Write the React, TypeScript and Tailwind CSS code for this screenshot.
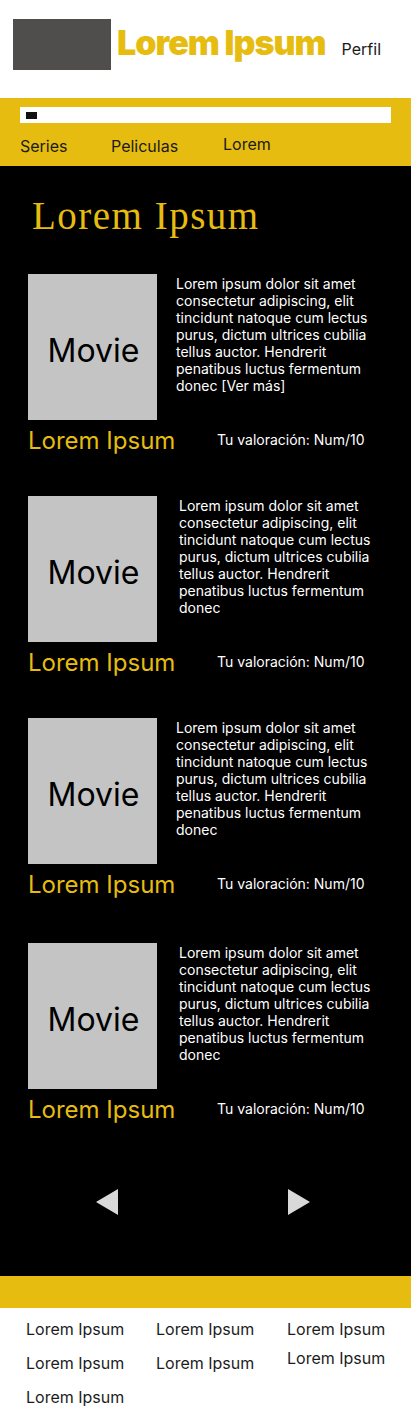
const font = { fontFamily: 'Inter, "Noto Sans", sans-serif' }

const blurb =
  'Lorem ipsum dolor sit amet consectetur adipiscing, elit tincidunt natoque cum lectus purus, dictum ultrices cubilia tellus auctor. Hendrerit penatibus luctus fermentum donec'

const movies = [
  { text: blurb + ' [Ver más]', textPad: 'ml-[19px]', top: '' },
  { text: blurb, textPad: 'ml-[22px]', top: '' },
  { text: blurb, textPad: 'ml-[19px]', top: '' },
  { text: blurb, textPad: 'ml-[22px]', top: 'mt-[3px]' },
]

function MovieCard({ text, textPad, top }: { text: string; textPad: string; top: string }) {
  return (
    <div className={`pl-[28px] ${top}`}>
      <div className="flex">
        <div className="w-[129px] h-[146px] shrink-0 bg-[#c4c4c4] flex items-center justify-center">
          <span className="text-[32px] text-black leading-none pl-[2px] pt-[8px]">Movie</span>
        </div>
        <p className={`${textPad} pt-[1px] text-[14px] leading-[17px] text-white w-[200px]`}>{text}</p>
      </div>
      <div className="flex items-center mt-[6px]">
        <span className="text-[24px] leading-[29px] text-[#e6bc10] w-[189px]">Lorem Ipsum</span>
        <span className="text-[14px] text-white leading-[17px] -mt-[2px]">Tu valoración: Num/10</span>
      </div>
    </div>
  )
}

export default function App() {
  return (
    <div className="w-[411px] bg-white" style={font}>
      <header className="h-[98px] flex items-start pt-[19px] pl-[13px]">
        <div className="w-[98px] h-[51px] bg-[#4f4e4c]" />
        <h1 className="ml-[6px] mt-[3px] text-[34px] leading-[42px] font-black text-[#e6bc10] tracking-[-1px]">
          Lorem Ipsum
        </h1>
        <span className="ml-[16px] mt-[20px] text-[16px] leading-[20px] text-[#1a1a1a]">Perfil</span>
      </header>

      <nav className="bg-[#e6bc10] h-[68px] pt-[9px]">
        <div className="mx-[20px] h-[16px] bg-white flex items-center pl-[6px]">
          <div className="w-[11px] h-[7px] bg-[#111]" />
        </div>
        <div className="flex mt-[13px] pl-[20px] text-[16px] leading-[20px] text-[#1a1a1a]">
          <span className="w-[91px]">Series</span>
          <span className="w-[112px]">Peliculas</span>
          <span className="-mt-[2px]">Lorem</span>
        </div>
      </nav>

      <main className="bg-black pt-[27px] pb-[61px]">
        <h2
          className="pl-[32px] text-[39px] leading-[46px] text-[#e6bc10] tracking-[1.5px]"
          style={{ fontFamily: '"Liberation Serif", serif' }}
        >
          Lorem Ipsum
        </h2>
        <div className="mt-[35px] flex flex-col gap-[41px]">
          {movies.map((m, i) => (
            <MovieCard key={i} text={m.text} textPad={m.textPad} top={m.top} />
          ))}
        </div>
        <div className="flex mt-[65px] pl-[96px] gap-[170px]">
          <svg width="22" height="26" viewBox="0 0 22 26">
            <polygon points="22,0 22,26 0,13" fill="#d9d9d9" />
          </svg>
          <svg width="22" height="26" viewBox="0 0 22 26">
            <polygon points="0,0 0,26 22,13" fill="#d9d9d9" />
          </svg>
        </div>
      </main>

      <div className="h-[32px] bg-[#e6bc10]" />
      <footer className="flex pl-[26px] pt-[11px] pb-[6px] text-[16px] leading-[20px] text-[#1c1c1c]">
        <div className="w-[130px] flex flex-col gap-[14px]">
          <span>Lorem Ipsum</span>
          <span>Lorem Ipsum</span>
          <span>Lorem Ipsum</span>
        </div>
        <div className="w-[131px] flex flex-col gap-[14px]">
          <span>Lorem Ipsum</span>
          <span>Lorem Ipsum</span>
        </div>
        <div className="flex flex-col gap-[9px]">
          <span>Lorem Ipsum</span>
          <span>Lorem Ipsum</span>
        </div>
      </footer>
    </div>
  )
}
